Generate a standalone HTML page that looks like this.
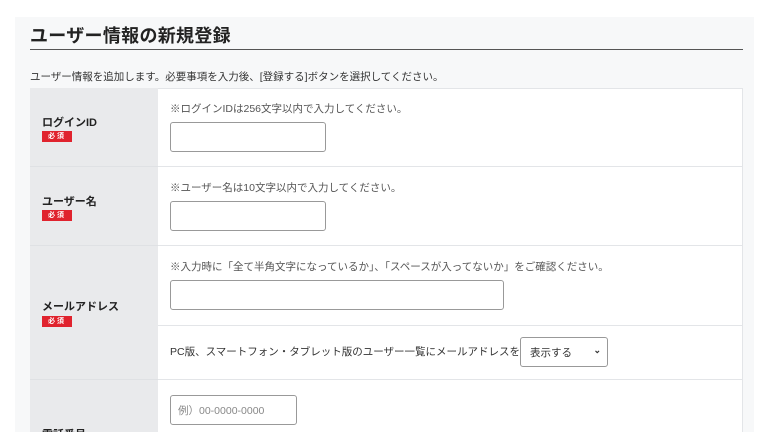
<!DOCTYPE html><html style="width:768px;height:432px;overflow:hidden"><head><meta charset="utf-8"><style>
*{box-sizing:border-box;margin:0;padding:0}
body{width:768px;height:432px;overflow:hidden;background:#fff;font-family:"Liberation Sans","Noto Sans CJK JP",sans-serif;color:#333;position:relative}
.panel{position:absolute;left:15px;top:17px;width:739px;height:415px;background:#f7f8f9}
.a{position:absolute}
h1{position:absolute;left:30px;top:22px;font-size:18px;font-weight:bold;color:#222;letter-spacing:0.3px}
.line{position:absolute;left:30px;top:49px;width:713px;height:1px;background:#555}
.desc{left:30px;top:69px;font-size:10.5px;color:#333;white-space:nowrap}
.tbl{position:absolute;left:30px;top:88px;width:713px;height:344px;background:#fff;border:1px solid #e3e5e8;border-bottom:0}
.lab{position:absolute;left:30px;width:128px;background:#e9eaec;border-bottom:1px solid #dfe1e4}
.row{position:absolute;left:158px;width:585px;border-bottom:1px solid #e3e5e8}
.lt{position:absolute;left:42px;font-size:11px;font-weight:bold;color:#222}
.b{position:absolute;left:42px;width:30px;height:11px;background:#e0232e;color:#fff;font-size:7px;font-weight:bold;text-align:center;line-height:11px;letter-spacing:2px}
.note{position:absolute;left:170px;font-size:10.5px;color:#555;white-space:nowrap}
.inp{position:absolute;left:170px;height:30px;border:1px solid #999;border-radius:3px;background:#fff}
</style></head><body>
<div class="panel"></div>
<h1>ユーザー情報の新規登録</h1>
<div class="line"></div>
<div class="a desc">ユーザー情報を追加します。必要事項を入力後、[登録する]ボタンを選択してください。</div>
<div class="tbl"></div>
<div class="lab" style="top:88px;height:79px"></div>
<div class="lab" style="top:167px;height:79px"></div>
<div class="lab" style="top:246px;height:134px"></div>
<div class="lab" style="top:380px;height:52px;border:0"></div>
<div class="row" style="top:88px;height:79px"></div>
<div class="row" style="top:167px;height:79px"></div>
<div class="row" style="top:246px;height:80px"></div>
<div class="row" style="top:326px;height:54px"></div>
<div class="lt" style="top:114px">ログインID</div><div class="b" style="top:131px">必須</div>
<div class="lt" style="top:193px">ユーザー名</div><div class="b" style="top:210px">必須</div>
<div class="lt" style="top:298px">メールアドレス</div><div class="b" style="top:316px">必須</div>
<div class="lt" style="top:426px">電話番号</div>
<div class="note" style="top:101px">※ログインIDは256文字以内で入力してください。</div>
<div class="inp" style="top:122px;width:156px"></div>
<div class="note" style="top:180px">※ユーザー名は10文字以内で入力してください。</div>
<div class="inp" style="top:201px;width:156px"></div>
<div class="note" style="top:259px">※入力時に「全て半角文字になっているか」、「スペースが入ってないか」をご確認ください。</div>
<div class="inp" style="top:280px;width:334px"></div>
<div class="note" style="top:344px;color:#333">PC版、スマートフォン・タブレット版のユーザー一覧にメールアドレスを</div>
<div class="inp" style="left:520px;top:337px;width:88px;font-size:10.5px;color:#333;padding:7px 0 0 9px">表示する<span style="position:absolute;right:6px;top:7px;font-size:9px;font-weight:bold">⌄</span></div>
<div class="inp" style="top:395px;width:127px;font-size:10.5px;color:#888;padding:7px 0 0 7px">例）00-0000-0000</div>
</body></html>
